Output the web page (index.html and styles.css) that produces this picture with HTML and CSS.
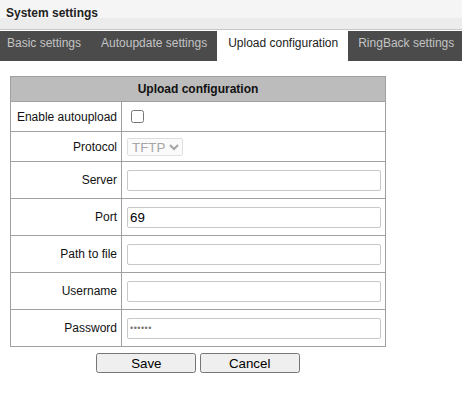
FILE: index.html
```html
<!DOCTYPE html>
<html>
<head>
<meta charset="utf-8">
<link rel="stylesheet" href="styles.css">
</head>
<body>
<div class="page-title">System settings</div>
<div class="tabs">
  <div class="tab first">Basic settings</div>
  <div class="tab">Autoupdate settings</div>
  <div class="tab active">Upload configuration</div>
  <div class="tab">RingBack settings</div>
  <div class="tab-fill"></div>
</div>
<div class="content">
  <table class="form">
    <colgroup><col class="c1"><col class="c2"></colgroup>
    <tr class="head"><th colspan="2">Upload configuration</th></tr>
    <tr class="short"><td class="lbl">Enable autoupload</td><td><input type="checkbox"></td></tr>
    <tr class="short"><td class="lbl">Protocol</td><td><select disabled><option>TFTP</option></select></td></tr>
    <tr class="tall"><td class="lbl">Server</td><td><input class="txt" type="text"></td></tr>
    <tr class="tall"><td class="lbl">Port</td><td><input class="txt" type="text" value="69"></td></tr>
    <tr class="tall"><td class="lbl">Path to file</td><td><input class="txt" type="text"></td></tr>
    <tr class="tall"><td class="lbl">Username</td><td><input class="txt" type="text"></td></tr>
    <tr class="tall"><td class="lbl">Password</td><td><input class="txt pwd" type="password" value="123456"></td></tr>
  </table>
  <div class="buttons">
    <button class="btn">Save</button>
    <button class="btn">Cancel</button>
  </div>
</div>
</body>
</html>
```
FILE: styles.css
```css
html, body {
  margin: 0;
  padding: 0;
  background: #fff;
  font-family: "Liberation Sans", Arial, sans-serif;
  font-size: 12px;
  color: #000;
}
.page-title {
  height: 30px;
  box-sizing: border-box;
  padding: 6px 0 0 6px;
  font-weight: bold;
  font-size: 12px;
  color: #222;
  background: linear-gradient(#f5f5f5 0, #f5f5f5 63%, #ececec 63%, #ececec 100%);
  border-bottom: 1px solid #c8c8c8;
  margin-bottom: 1px;
}
.tabs {
  display: flex;
  height: 30px;
  background: #4b4b4b;
}
.tab {
  padding: 0 10px;
  line-height: 24px;
  color: #c3c3c3;
  white-space: nowrap;
}
.tab.first { padding-left: 7px; }
.tab.active {
  background: #fff;
  color: #222;
  padding: 0 10px 0 11px;
}
.content {
  padding: 15px 0 0 10px;
}
.form {
  border-collapse: collapse;
  table-layout: fixed;
  width: 376px;
}
.c1 { width: 111px; }
.form th, .form td {
  border: 1px solid #a0a0a0;
  padding: 0 5px;
  vertical-align: middle;
}
.form th {
  background: #bcbcbc;
  font-weight: bold;
  color: #111;
  height: 24px;
}
.form .lbl {
  text-align: right;
  color: #111;
  white-space: nowrap;
  padding: 0 4px 0 2px;
}
.short td { height: 29px; }
.tall td { height: 36px; }
.txt {
  width: 254px;
  height: 21px;
  box-sizing: border-box;
  border: 1px solid #c8c8c8;
  border-radius: 2px;
  padding: 1px 2px;
  font-family: "Liberation Sans", Arial, sans-serif;
  font-size: 13.33px;
  margin: 0;
  display: block;
}
.pwd { font-size: 9px; color: #777; letter-spacing: 0.5px; }
select {
  font-family: "Liberation Sans", Arial, sans-serif;
  font-size: 13.33px;
  height: 18px;
  display: block;
}
.buttons {
  width: 376px;
  text-align: center;
  padding-top: 6px;
}
.btn {
  width: 100px;
  height: 20px;
  font-family: "Liberation Sans", Arial, sans-serif;
  font-size: 13.33px;
  padding: 0;
}
```
